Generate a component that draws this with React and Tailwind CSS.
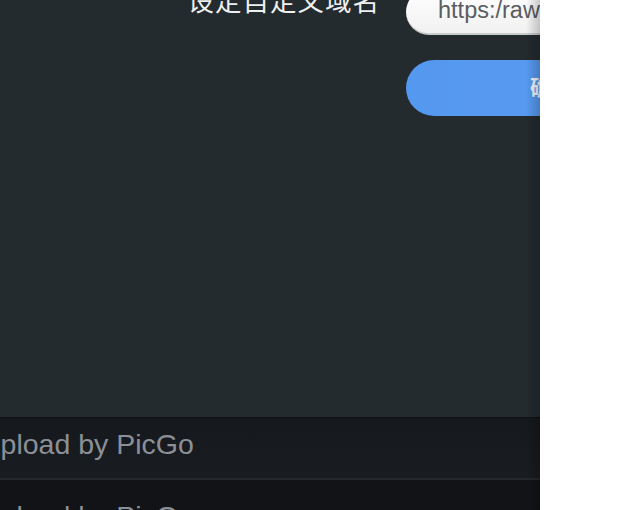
import React from 'react'

const sans = { fontFamily: '"Liberation Sans", "Noto Sans CJK SC", sans-serif' }

const FooterRow = ({ top }) => (
    <div className={`flex h-[60px] items-start overflow-hidden ${top}`}>
        <span className="-ml-[20px] whitespace-nowrap text-[28.5px] leading-none text-[#8b9097]">
            Upload by PicGo
        </span>
    </div>
)

export default function App() {
    return (
        <div className="flex h-[510px] w-[642px] bg-white" style={sans}>
            {/* Settings panel, scrolled so only part of it shows */}
            <div className="relative flex h-full w-[540px] flex-col overflow-hidden bg-[#232b2f]">
                <div className="flex-1">
                    <div className="-mt-[15px] flex flex-col gap-[25px]">
                        <div className="flex items-start gap-[26px]">
                            <label className="mt-[3px] w-[380px] shrink-0 text-right text-[26.5px] leading-[28px] tracking-[1px] text-[#eef0f1]">
                                设定自定义域名
                            </label>
                            <div className="mt-[4px] flex h-[46px] w-[300px] shrink-0 items-center rounded-full border-b-2 border-[#c9cbcd] bg-gradient-to-b from-white to-[#f1f1f1] pl-[32px] text-[23.5px] text-[#5a5d61]">
                                <span className="whitespace-nowrap">https:/raw.githubusercontent.com</span>
                            </div>
                        </div>
                        <div className="flex pl-[406px]">
                            <button className="flex h-[56px] w-[290px] shrink-0 items-center justify-center rounded-full bg-gradient-to-r from-[#5598ef] to-[#5a9bf2] text-[21px] font-bold text-[#f3f6fb]">
                                确定
                            </button>
                        </div>
                    </div>
                </div>

                {/* Footer list */}
                <div className="border-t border-[#0e1012] bg-gradient-to-b from-[#15181c] to-[#191c20]">
                    <FooterRow top="pt-[12px]" />
                </div>
                <div className="h-[2px] bg-[#25282c]" />
                <div className="h-[30px] bg-[#111317]">
                    <FooterRow top="pt-[22px]" />
                </div>

                {/* edge shade */}
                <div className="pointer-events-none absolute inset-y-0 right-0 w-[14px] bg-gradient-to-r from-transparent to-black/20" />
            </div>
        </div>
    )
}
